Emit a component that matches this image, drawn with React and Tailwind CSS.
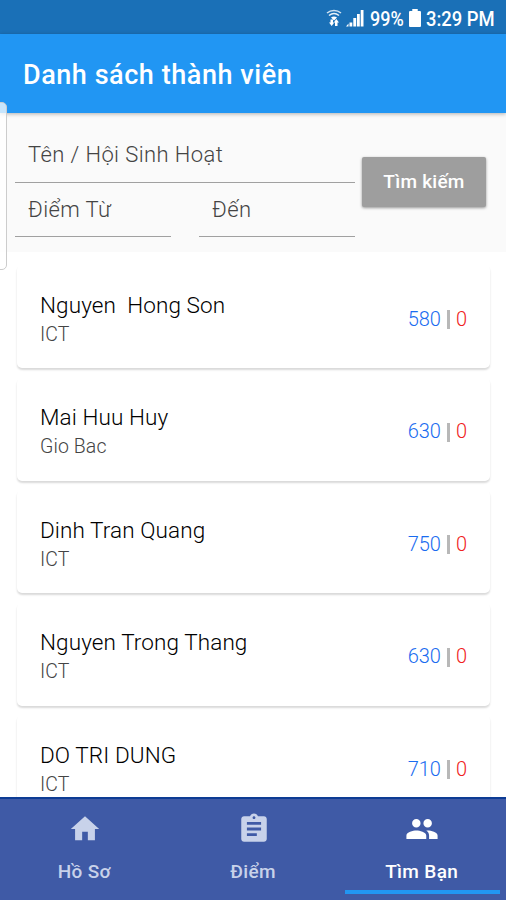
import React from 'react';
import { MdHome, MdAssignment, MdPeople } from 'react-icons/md';

const members = [
  { name: 'Nguyen  Hong Son', group: 'ICT', points: 580, used: 0 },
  { name: 'Mai Huu Huy', group: 'Gio Bac', points: 630, used: 0 },
  { name: 'Dinh Tran Quang', group: 'ICT', points: 750, used: 0 },
  { name: 'Nguyen Trong Thang', group: 'ICT', points: 630, used: 0 },
  { name: 'DO TRI DUNG', group: 'ICT', points: 710, used: 0 },
];

const tabs = [
  { label: 'Hồ Sơ', icon: MdHome },
  { label: 'Điểm', icon: MdAssignment },
  { label: 'Tìm Bạn', icon: MdPeople, active: true },
];

function StatusBar() {
  return (
    <div className="h-[34px] shrink-0 bg-[#1a70b7] text-white flex items-center justify-end pr-[11px] pt-[2px]">
      {/* Wifi with transfer arrows */}
      <svg width="16" height="18" viewBox="0 0 16 18" fill="none" stroke="currentColor" className="mr-[4px]">
        <path d="M1 4C5 .5 11 .5 15 4" strokeWidth="1.5" opacity=".8" />
        <path d="M3 6.500c3-2.400 7-2.400 10 0" strokeWidth="1.600" opacity=".9" />
        <path d="M5 8.500q3-2 6 0L8 11.500z" fill="currentColor" stroke="none" />
        <path d="M3 13.500h1.500v-3h2.500v3h1.300L5.700 17zM13 13.500h-1.500V17H9v-3.500H7.800L10.300 10z" fill="currentColor" stroke="none" />
      </svg>
      {/* Signal bars */}
      <svg width="18" height="18" viewBox="0 0 18 18" fill="currentColor" className="mr-[6px]">
        <path d="M0 17.500h2.500v-3zM3.500 13.500h2.800v4H3.500zM7.300 9h2.900v8.500H7.300zM11 5h2.800v12.500H11zM14.700 1h2.800v16.500h-2.800z" />
      </svg>
      <div className="w-[35px] mr-[4px]">
        <span className="block origin-left scale-x-[0.9] whitespace-nowrap text-[20px] leading-6 pt-[1px] font-medium">99%</span>
      </div>
      {/* Battery */}
      <svg width="12" height="18" viewBox="0 0 11 18" preserveAspectRatio="none" fill="currentColor" className="mr-[5px]">
        <path d="M3 0h5v2h2q1 0 1 1v14q0 1-1 1H1q-1 0-1-1V3q0-1 1-1h2z" />
      </svg>
      <div className="w-[69px]">
        <span className="block origin-left scale-x-[0.92] whitespace-nowrap text-[20px] leading-6 pt-[1px] font-medium">3:29 PM</span>
      </div>
    </div>
  );
}

function Field({ label, className }) {
  return (
    <div className={`border-b border-[#a0a0a0] pl-[13px] text-[22px] leading-[26px] tracking-[0.4px] font-light text-[#444] ${className}`}>
      {label}
    </div>
  );
}

function SearchPanel() {
  return (
    <div className="h-[139px] shrink-0 bg-[#fafafa] pl-[15px] pr-5 flex">
      <div className="w-[340px]">
        <Field label="Tên / Hội Sinh Hoạt" className="h-[70px] pt-[29px]" />
        <div className="flex justify-between">
          <Field label="Điểm Từ" className="w-[156px] h-[54px] pt-[14px]" />
          <Field label="Đến" className="w-[156px] h-[54px] pt-[14px]" />
        </div>
      </div>
      <button className="ml-[7px] mt-[44px] w-[124px] h-[50px] rounded-[2px] bg-[#9e9e9e] text-white text-[19px] tracking-[0.25px] font-medium shadow-[0_1px_3px_rgba(0,0,0,0.4)]">
        Tìm kiếm
      </button>
    </div>
  );
}

function MemberCard({ name, group, points, used }) {
  return (
    <div className="h-[103px] shrink-0 rounded-[5px] bg-white px-[23px] flex items-center justify-between shadow-[0_2px_2px_rgba(0,0,0,0.15)]">
      <div className="pt-[6px]">
        <div className="whitespace-pre text-[22.500px] leading-[28px] tracking-[0.1px] font-light text-black">{name}</div>
        <div className="mt-[2px] text-[19.500px] leading-[28px] tracking-[0.1px] font-light text-[#444]">{group}</div>
      </div>
      <div className="flex items-center pt-[4px] text-[20px] font-light">
        <span className="text-[#1a6cf0]">{points}</span>
        <span className="w-[3px] h-[19px] mt-[2px] ml-[6px] mr-[6px] bg-[#b8b8b8]" />
        <span className="text-[#f02020]">{used}</span>
      </div>
    </div>
  );
}

function BottomTabs() {
  return (
    <nav className="h-[103px] shrink-0 bg-[#3f5aa6] border-t-2 border-[#0d3c94] flex relative">
      {tabs.map(({ label, icon: Icon, active }) => (
        <div
          key={label}
          className={`flex-1 flex flex-col items-center pt-[13px] font-medium ${active ? 'text-white' : 'text-[#c8d2ea]'}`}
        >
          <Icon size={34} className="ml-px" />
          <span className="mt-[14px] text-[19px] leading-6 tracking-[0.35px]">{label}</span>
          {active && <span className="ml-[2px] mt-[6px] h-[4px] w-[155px] bg-[#2196f3]" />}
        </div>
      ))}
    </nav>
  );
}

export default function App() {
  return (
    <div className="w-[506px] h-[900px] relative overflow-hidden bg-white flex flex-col font-[Roboto,sans-serif]">
      <StatusBar />
      <header className="h-[79px] shrink-0 bg-[#2196f3] flex items-center pl-[23px] pt-[3px] relative z-10 shadow-[0_1px_4px_rgba(0,0,0,0.3)]">
        <h1 className="text-[27px] tracking-[0.55px] font-medium text-white">Danh sách thành viên</h1>
      </header>
      <SearchPanel />
      <main className="flex-1 min-h-0 overflow-hidden flex flex-col gap-[9.500px] pl-[17px] pr-4 pt-[13px]">
        {members.map((member) => (
          <MemberCard key={member.name} {...member} />
        ))}
      </main>
      <BottomTabs />

      {/* Edge panel handle */}
      <div className="absolute z-20 -left-2 top-[102px] w-[15px] h-[168px] rounded-[5px] border border-[#ccc] bg-white/75" />
    </div>
  );
}
